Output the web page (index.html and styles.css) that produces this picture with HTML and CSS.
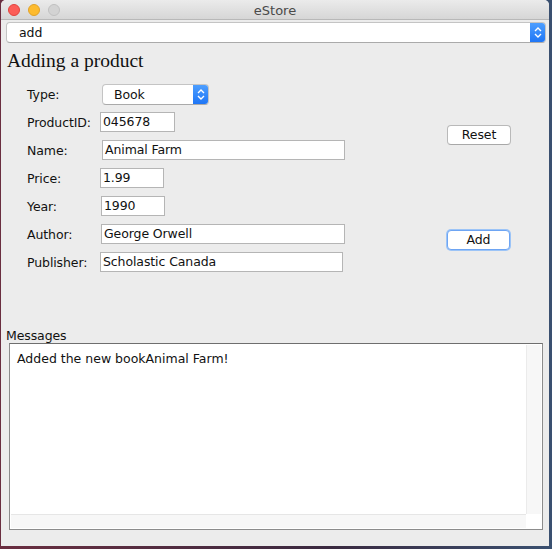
FILE: index.html
```html
<!DOCTYPE html>
<html>
<head>
<meta charset="utf-8">
<link rel="stylesheet" href="styles.css">
</head>
<body>
<div class="window">
  <div class="titlebar">
    <div class="lights">
      <span class="light red"></span>
      <span class="light yellow"></span>
      <span class="light grey"></span>
    </div>
    <div class="title">eStore</div>
    <div></div>
  </div>
  <div class="content">
    <div class="combo main-combo">
      <span class="combo-text">add</span>
      <span class="combo-arrow">
        <svg width="16" height="21" viewBox="0 0 16 21"><path d="M5 9 L8 6 L11 9 M5 12 L8 15 L11 12" fill="none" stroke="#fff" stroke-width="1.4"/></svg>
      </span>
    </div>
    <h1 class="heading">Adding a product</h1>
    <div class="form">
      <div class="fields">
        <div class="row">
          <span class="label">Type:</span>
          <div class="combo type-combo">
            <span class="combo-text">Book</span>
            <span class="combo-arrow">
              <svg width="16" height="21" viewBox="0 0 16 21"><path d="M5 9 L8 6 L11 9 M5 12 L8 15 L11 12" fill="none" stroke="#fff" stroke-width="1.4"/></svg>
            </span>
          </div>
        </div>
        <div class="row">
          <span class="label">ProductID:</span>
          <div class="tf f-id">045678</div>
        </div>
        <div class="row">
          <span class="label">Name:</span>
          <div class="tf f-name">Animal Farm</div>
        </div>
        <div class="row">
          <span class="label">Price:</span>
          <div class="tf f-price">1.99</div>
        </div>
        <div class="row">
          <span class="label">Year:</span>
          <div class="tf f-year">1990</div>
        </div>
        <div class="row">
          <span class="label">Author:</span>
          <div class="tf f-author">George Orwell</div>
        </div>
        <div class="row">
          <span class="label">Publisher:</span>
          <div class="tf f-pub">Scholastic Canada</div>
        </div>
      </div>
      <div class="actions">
        <button class="btn reset">Reset</button>
        <button class="btn add">Add</button>
      </div>
    </div>
    <div class="messages">
      <div class="msg-label">Messages</div>
      <div class="msg-box">
        <div class="msg-main">
          <div class="msg-text">Added the new bookAnimal Farm!</div>
          <div class="vscroll"></div>
        </div>
        <div class="msg-bottom">
          <div class="hscroll"></div>
          <div class="corner"></div>
        </div>
      </div>
    </div>
  </div>
</div>
</body>
</html>
```
FILE: styles.css
```css
html, body {
  margin: 0;
  padding: 0;
}
body {
  width: 552px;
  height: 549px;
  background: linear-gradient(to right, #6a2e40, #3a2a40 60%, #3a5070);
  font-family: "DejaVu Sans", sans-serif;
  font-size: 12.5px;
  letter-spacing: -0.1px;
  color: #111;
  overflow: hidden;
}
.window {
  margin-left: 1px;
  width: 548px;
  height: 546px;
  background: #ececec;
  border-radius: 5px 5px 0 0;
  display: flex;
  flex-direction: column;
  overflow: hidden;
}
.titlebar {
  height: 19px;
  flex: none;
  background: linear-gradient(#ebebeb, #d6d6d6);
  border-bottom: 1px solid #b8b8b8;
  display: grid;
  grid-template-columns: 1fr auto 1fr;
  align-items: center;
}
.lights {
  display: flex;
  gap: 8px;
  padding-left: 7px;
  padding-top: 1px;
}
.light {
  width: 12px;
  height: 12px;
  border-radius: 50%;
  box-sizing: border-box;
}
.red { background: #fc5d57; border: 1px solid #e0443e; }
.yellow { background: #fdbb2e; border: 1px solid #e0a229; }
.grey { background: #d3d3d3; border: 1px solid #c0c0c0; }
.title {
  color: #4a4a4a;
  font-size: 13px;
  letter-spacing: 0;
  padding-top: 1px;
}
.content {
  padding: 2px 0 0 0;
  display: flex;
  flex-direction: column;
}
.combo {
  display: flex;
  align-items: center;
  box-sizing: border-box;
  height: 21px;
  background: #fff;
  border: 1px solid #c4c4c4;
  border-bottom-color: #aaa;
  border-radius: 4px;
  overflow: hidden;
}
.combo-text {
  flex: 1;
}
.combo-arrow {
  width: 16px;
  height: 21px;
  background: linear-gradient(#4fa0ff, #1d74f5);
  display: flex;
  align-self: stretch;
  margin: -1px -1px -1px 0;
}
.main-combo {
  margin-left: 5px;
  width: 540px;
}
.main-combo .combo-text {
  padding-left: 12px;
}
.heading {
  font-family: "Liberation Serif", serif;
  font-weight: normal;
  font-size: 19.5px;
  letter-spacing: 0;
  margin: 7px 0 0 6px;
  line-height: 22px;
  color: #111;
}
.form {
  display: flex;
  margin-top: 8px;
}
.fields {
  margin-left: 26px;
  width: 330px;
  display: flex;
  flex-direction: column;
}
.row {
  height: 28px;
  display: flex;
  align-items: center;
}
.label {
  width: 73px;
  flex: none;
}
.type-combo {
  margin-left: 2px;
  width: 107px;
}
.type-combo .combo-text {
  padding-left: 11px;
}
.tf {
  box-sizing: border-box;
  height: 20px;
  background: #fff;
  border: 1px solid #b5b5b5;
  padding-left: 2px;
  line-height: 18px;
  white-space: nowrap;
}
.f-id { width: 75px; }
.f-name { width: 243px; margin-left: 2px; }
.f-price { width: 64px; }
.f-year { width: 64px; margin-left: 1px; }
.f-author { width: 244px; margin-left: 1px; }
.f-pub { width: 243px; }
.actions {
  margin-left: 90px;
  display: flex;
  flex-direction: column;
  align-items: flex-start;
}
.btn {
  font-family: "DejaVu Sans", sans-serif;
  font-size: 12.5px;
  letter-spacing: -0.1px;
  color: #111;
  background: #fff;
  box-sizing: border-box;
  height: 20px;
  padding: 0;
  border-radius: 4px;
  line-height: 18px;
}
.reset {
  width: 64px;
  margin-top: 45px;
  border: 1px solid #b9b9b9;
  border-bottom-color: #a8a8a8;
}
.add {
  width: 63px;
  margin-top: 85px;
  border: 1px solid #6ea5f3;
  box-shadow: 0 0 0 1px #9cc4f7;
}
.messages {
  margin-top: 53px;
  display: flex;
  flex-direction: column;
}
.msg-label {
  margin-left: 5px;
  line-height: 14px;
}
.msg-box {
  margin-left: 8px;
  width: 534px;
  height: 187px;
  box-sizing: border-box;
  border: 1px solid #8c8c8c;
  border-top-color: #6e6e6e;
  background: #fff;
  display: flex;
  flex-direction: column;
  padding: 1px;
}
.msg-main {
  flex: 1;
  display: flex;
}
.msg-text {
  flex: 1;
  padding: 6px 0 0 6px;
  letter-spacing: 0;
}
.vscroll {
  width: 14px;
  background: #f7f7f7;
  border-left: 1px solid #ebebeb;
}
.msg-bottom {
  height: 14px;
  display: flex;
}
.hscroll {
  flex: 1;
  background: #f7f7f7;
  border-top: 1px solid #e6e6e6;
}
.corner {
  width: 15px;
  background: #fff;
}
```
